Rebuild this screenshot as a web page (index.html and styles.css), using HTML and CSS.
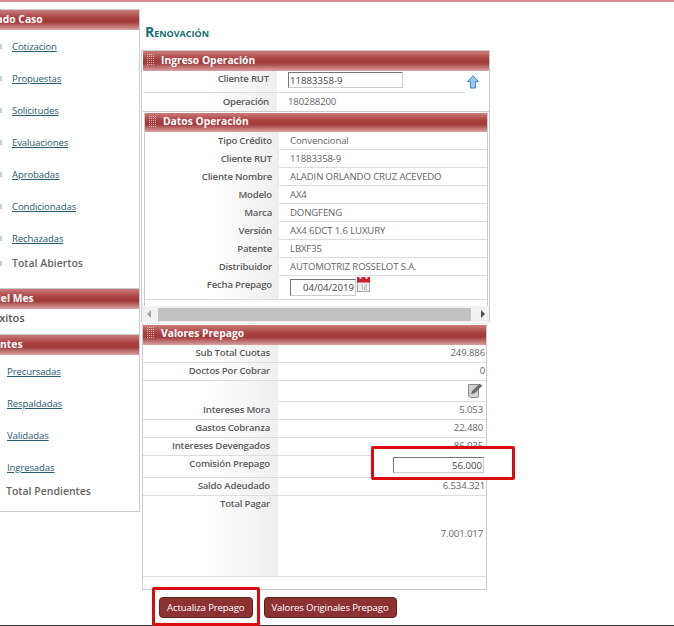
FILE: index.html
```html
<!DOCTYPE html>
<html lang="es">

<head>
    <meta charset="UTF-8">
    <title>Renovación</title>
    <link rel="stylesheet" href="styles.css">
</head>

<body>
    <div class="topline"></div>

    <div class="page">
        <div class="side">
            <div class="side-box box-estado">
                <div class="head head-estado">Listado Caso</div>
                <div class="link-row"><i></i><a href="#">Cotizacion</a></div>
                <div class="link-row"><i></i><a href="#">Propuestas</a></div>
                <div class="link-row"><i></i><a href="#">Solicitudes</a></div>
                <div class="link-row"><i></i><a href="#">Evaluaciones</a></div>
                <div class="link-row"><i></i><a href="#">Aprobadas</a></div>
                <div class="link-row"><i></i><a href="#">Condicionadas</a></div>
                <div class="link-row"><i></i><a href="#">Rechazadas</a></div>
                <div class="total-row"><i></i><b>Total Abiertos</b></div>
            </div>
            <div class="side-box box-mes">
                <div class="head head-mes">Resultados del Mes</div>
                <div class="exitos">Éxitos</div>
            </div>
            <div class="side-box box-pend">
                <div class="head head-pend">Pendientes</div>
                <div class="link-row"><a href="#">Precursadas</a></div>
                <div class="link-row"><a href="#">Respaldadas</a></div>
                <div class="link-row"><a href="#">Validadas</a></div>
                <div class="link-row"><a href="#">Ingresadas</a></div>
                <div class="total-row"><b>Total Pendientes</b></div>
            </div>
        </div>

        <div class="main">
            <h1 class="title">Renovación</h1>

            <div class="panel-outer">
                <div class="head"><span class="grip"></span>Ingreso Operación</div>
                <div class="ingreso">
                    <div class="ingreso-rows">
                        <div class="row row-rut">
                            <label>Cliente RUT</label>
                            <div class="val"><input class="inp inp-rut" type="text" value="11883358-9"></div>
                        </div>
                        <div class="row row-op">
                            <label>Operación</label>
                            <div class="val">180288200</div>
                        </div>
                    </div>
                    <div class="up-cell">
                        <svg width="12" height="14" viewBox="0 0 12 14">
                            <path d="M6 .7 11.4 6.6H8.6V13H3.4V6.6H.6Z" fill="#9cc8f0" stroke="#3d86c6" stroke-width="1" stroke-linejoin="round"/>
                        </svg>
                    </div>
                </div>

                <div class="panel-inner">
                    <div class="head head-inner"><span class="grip"></span>Datos Operación</div>
                    <div class="row"><label>Tipo Crédito</label><div class="val">Convencional</div></div>
                    <div class="row"><label>Cliente RUT</label><div class="val">11883358-9</div></div>
                    <div class="row"><label>Cliente Nombre</label><div class="val">ALADIN ORLANDO CRUZ ACEVEDO</div></div>
                    <div class="row"><label>Modelo</label><div class="val">AX4</div></div>
                    <div class="row"><label>Marca</label><div class="val">DONGFENG</div></div>
                    <div class="row"><label>Versión</label><div class="val">AX4 6DCT 1.6 LUXURY</div></div>
                    <div class="row"><label>Patente</label><div class="val">LBXF35</div></div>
                    <div class="row"><label>Distribuidor</label><div class="val">AUTOMOTRIZ ROSSELOT S.A.</div></div>
                    <div class="row row-fecha">
                        <label>Fecha Prepago</label>
                        <div class="val">
                            <input class="inp inp-fecha" type="text" value="04/04/2019">
                            <svg class="cal" width="13" height="15" viewBox="0 0 13 15">
                                <rect x=".5" y="4" width="12" height="10.500" fill="#eee" stroke="#aaa"/>
                                <rect width="13" height="5.500" fill="#c8202c"/>
                                <rect x="2.500" width="2" height="2" fill="#eee"/>
                                <rect x="8.500" width="2" height="2" fill="#eee"/>
                                <path d="M4 8h1.500v4.500M7.500 8h2v2h-2v2.500h2.500" fill="none" stroke="#b5b5b5"/>
                            </svg>
                        </div>
                    </div>
                </div>

                <div class="hscroll">
                    <span class="arrow-l"></span>
                    <span class="thumb"></span>
                    <span class="arrow-r"></span>
                </div>
            </div>

            <div class="panel-valores">
                <div class="head"><span class="grip"></span>Valores Prepago</div>
                <div class="row num"><label>Sub Total Cuotas</label><div class="val">249.886</div></div>
                <div class="row num"><label>Doctos Por Cobrar</label><div class="val">0</div></div>
                <div class="row num row-edit">
                    <label></label>
                    <div class="val">
                        <svg width="15" height="15" viewBox="0 0 15 15">
                            <path d="M.5 1.500h10v12.500l-2 .5H2.500L.5 13Z" fill="#d2d2d2" stroke="#8a8a8a"/>
                            <path d="M3 11 4 8 11.500 .8 14.500 2.500 6.500 10.500Z" fill="#6e6e6e"/>
                        </svg>
                    </div>
                </div>
                <div class="row num num-in"><label>Intereses Mora</label><div class="val">5.053</div></div>
                <div class="row num num-in"><label>Gastos Cobranza</label><div class="val">22.480</div></div>
                <div class="row num num-in"><label>Intereses Devengados</label><div class="val">86.035</div></div>
                <div class="row num row-comision"><label>Comisión Prepago</label><div class="val"></div></div>
                <div class="row num"><label>Saldo Adeudado</label><div class="val">6.534.321</div></div>
                <div class="row num num-in row-total"><label>Total Pagar</label><div class="val">7.001.017</div></div>
                <div class="panel-foot"></div>
            </div>

            <div class="actions">
                <button class="btn" type="button">Actualiza Prepago</button>
                <button class="btn" type="button">Valores Originales Prepago</button>
            </div>
        </div>
    </div>

    <div class="bottomline"></div>

    <!-- recuadros rojos sobre la captura -->
    <div class="mark mark-comision"><input class="inp inp-comision" type="text" value="56.000"></div>
    <div class="mark mark-btn"></div>
</body>

</html>
```

FILE: styles.css
```css
* {
    margin: 0;
    padding: 0;
    box-sizing: border-box;
}

html,
body {
    height: 626px;
    overflow: hidden;
}

body {
    position: relative;
    background: #fff;
    font-family: "Open Sans", "Liberation Sans", sans-serif;
    font-size: 9.6px;
    letter-spacing: -.13px;
    color: #666;
}

.topline {
    height: 2px;
    background: #d98d98;
}

.bottomline {
    position: absolute;
    left: 0;
    right: 0;
    bottom: 0;
    height: 1px;
    background: #333;
}

.page {
    display: flex;
    align-items: flex-start;
}

/* barra lateral, cortada a la izquierda */
.side {
    flex: none;
    width: 140px;
    padding-top: 7px;
    overflow: hidden;
}

.side-box {
    width: 220px;
    margin-left: -80px;
    border-top: 1px solid #ccc;
    border-right: 1px solid #ccc;
}

.box-estado {
    height: 279px;
}

.box-mes {
    height: 46px;
}

.box-pend {
    height: 178px;
    border-bottom: 1px solid #ccc;
}

.head {
    display: flex;
    align-items: center;
    height: 20px;
    padding-bottom: 3px;
    background: linear-gradient(#cb7c7c 0, #a8413f 40%, #a03a3a 60%, #dba2a2 100%);
    font-size: 10.3px;
    font-weight: 700;
    letter-spacing: 0;
    color: #fff;
    white-space: nowrap;
}

.side .head {
    padding-bottom: 2px;
}

.head-estado {
    padding-left: 58px;
}

.head-mes {
    padding-left: 15px;
}

.head-pend {
    padding-left: 45px;
}

.link-row {
    display: flex;
    align-items: center;
    height: 32px;
    padding-left: 87px;
}

.link-row a {
    color: #2b5a6b;
}

.box-estado .link-row,
.box-estado .total-row {
    padding-left: 80px;
}

.link-row i,
.total-row i {
    flex: none;
    width: 2px;
    height: 5px;
    margin-right: 10px;
    background: #c3ced6;
}

.total-row {
    display: flex;
    align-items: center;
    height: 18px;
    padding-left: 86px;
    font-size: 10.5px;
    letter-spacing: 0;
    color: #666;
}

.box-pend .total-row {
    padding-bottom: 2px;
}

.total-row b {
    font-weight: 600;
}

.exitos {
    height: 25px;
    line-height: 18px;
    padding-left: 73px;
    font-size: 11px;
    font-weight: 600;
    letter-spacing: 0;
    color: #555;
}

/* columna principal */
.main {
    flex: none;
    width: 350px;
    margin-left: 1px;
}

.title {
    height: 48px;
    padding: 22px 0 0 4px;
    font-size: 13px;
    line-height: 16px;
    font-weight: 700;
    font-variant: small-caps;
    letter-spacing: 0;
    color: #12716f;
}

.title::first-letter {
    font-size: 14px;
}

.grip {
    flex: none;
    width: 8px;
    height: 11px;
    margin: 0 7px 0 3px;
    background: conic-gradient(rgba(255, 255, 255, .55) 25%, transparent 0) 0 0 / 2px 2px;
}

.panel-outer {
    width: 349px;
    height: 272px;
    border: 1px solid #ccc;
    border-bottom: 0;
    padding-left: 1px;
    overflow: hidden;
}

.ingreso {
    display: flex;
    border-bottom: 1px solid #ccc;
}

.ingreso-rows {
    flex: none;
    width: 322px;
}

.up-cell {
    padding: 4px 0 0 2px;
}

.row {
    display: grid;
    grid-template-columns: 134px 1fr;
    height: 18px;
    border-bottom: 1px solid #ddd;
}

.row label {
    display: block;
    padding-right: 7px;
    line-height: 18px;
    text-align: right;
    font-weight: 600;
    letter-spacing: -.2px;
    color: #5c5c5c;
    background: linear-gradient(90deg, #fff 50%, #eee 100%);
}

.row .val {
    padding-left: 11px;
    line-height: 18px;
    white-space: nowrap;
}

.row-rut {
    height: 22px;
}

.ingreso-rows label {
    padding-right: 8px;
}

.row-rut label {
    line-height: 16px;
}

.row-rut .val {
    padding-top: 1px;
}

.row-op {
    border-bottom: 0;
}

.row-op label,
.row-op .val {
    line-height: 17px;
}

.inp {
    display: block;
    height: 16px;
    border: 1px solid #ccc;
    border-top-color: #777;
    border-left-color: #777;
    background: #fff;
    font-family: inherit;
    font-size: 9.6px;
    color: #444;
    outline: 0;
}

.inp-rut {
    width: 115px;
    padding: 0 1px;
}

.panel-inner {
    width: 344px;
    height: 193px;
    margin: 1px 0 0 1px;
    border-left: 1px solid #ccc;
    border-right: 1px solid #ccc;
    overflow: hidden;
}

.head-inner {
    height: 19px;
}

.row-fecha {
    height: 24px;
}

.row-fecha .val {
    display: flex;
    align-items: flex-start;
}

.inp-fecha {
    width: 66px;
    height: 17px;
    margin-top: 3px;
    padding-left: 12px;
}

.cal {
    margin-top: 1px;
    margin-left: 1px;
}

.hscroll {
    display: flex;
    align-items: center;
    height: 16px;
    margin-left: -1px;
    background: #f1f1f1;
}

.thumb {
    flex: none;
    width: 313px;
    height: 13px;
    margin: 0 6px 0 0;
    background: #c1c1c1;
}

.arrow-l,
.arrow-r {
    width: 0;
    height: 0;
    border-top: 4px solid transparent;
    border-bottom: 4px solid transparent;
}

.arrow-l {
    margin: 0 7px 0 5px;
    border-right: 4px solid #a3a3a3;
}

.arrow-r {
    margin-left: 4px;
    border-left: 4px solid #505050;
}

.panel-valores {
    width: 345px;
    height: 267px;
    margin: 1px 0 0 1px;
    padding-top: 1px;
    border-left: 1px solid #ccc;
    border-right: 1px solid #ccc;
    border-bottom: 1px solid #ccc;
    border-top: 1px solid #e4e4e4;
}

.panel-valores .head {
    padding-bottom: 5px;
}

.num {
    grid-template-columns: 135px 1fr;
}

.num label {
    padding-right: 8px;
    line-height: 15px;
}

.row.num .val {
    padding: 0 1px 0 0;
    line-height: 15px;
    text-align: right;
}

.row.num-in .val {
    padding-right: 3px;
}

.row-edit {
    height: 21px;
}

.row.row-edit .val {
    padding: 2px 3px 0 0;
}

.row-comision {
    height: 22px;
}

.row-total {
    height: 81px;
}

.row.row-total .val {
    line-height: 76px;
}

.panel-foot {
    height: 13px;
}

.actions {
    display: flex;
    gap: 11px;
    padding: 7px 0 0 18px;
}

.btn {
    height: 21px;
    padding: 0 7px;
    border: 1px solid #5a2322;
    border-radius: 4px;
    background: #8c3233;
    font-family: inherit;
    font-size: 9.6px;
    letter-spacing: -.13px;
    color: #fff;
    white-space: nowrap;
}

.mark {
    position: absolute;
    border: 3px solid #d90b0f;
    border-radius: 2px;
}

.mark-comision {
    left: 371px;
    top: 446px;
    width: 144px;
    height: 34px;
    display: flex;
    justify-content: flex-end;
    padding: 8px 28px 0 0;
    background: #fff;
}

.inp-comision {
    width: 91px;
    padding-right: 1px;
    text-align: right;
}

.mark-btn {
    left: 152px;
    top: 587px;
    width: 108px;
    height: 39px;
}
```
